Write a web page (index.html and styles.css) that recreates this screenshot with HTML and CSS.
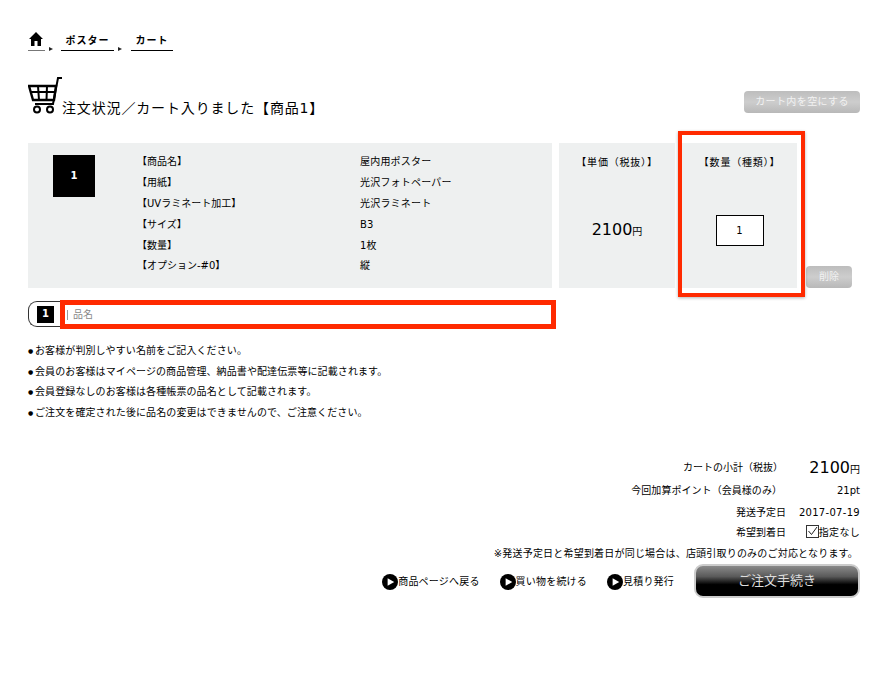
FILE: index.html
```html
<!DOCTYPE html>
<html lang="ja">
<head>
<meta charset="utf-8">
<title>カート</title>
<link rel="stylesheet" href="styles.css">
</head>
<body>
<div class="page">
  <nav class="crumbs">
    <a class="crumb crumb-home">
      <svg width="14" height="14" viewBox="0 0 14 14"><path d="M7 0 L14 7 H12 V14 H8.500 V9 H5.500 V14 H2 V7 H0 Z" fill="#000"/></svg>
    </a>
    <span class="sep"></span>
    <a class="crumb crumb-poster">ポスター</a>
    <span class="sep"></span>
    <a class="crumb crumb-cart">カート</a>
  </nav>

  <header class="head">
    <div class="title">
      <svg class="cart" width="35" height="37" viewBox="0 0 35 37">
        <path d="M34 1 H30 L25 27 H7" fill="none" stroke="#000" stroke-width="2"/>
        <path d="M1 9 H28 L26 23 H5 Z" fill="none" stroke="#000" stroke-width="2.400"/>
        <path d="M2 15 H27 M10 9 L11 23 M19 9 L18.500 23" fill="none" stroke="#000" stroke-width="2"/>
        <circle cx="9" cy="32.500" r="3" fill="none" stroke="#000" stroke-width="2"/>
        <circle cx="22" cy="32.500" r="3" fill="none" stroke="#000" stroke-width="2"/>
      </svg>
      <h1>注文状況／カート入りました【商品1】</h1>
    </div>
    <button class="btn-grey btn-empty">カート内を空にする</button>
  </header>

  <section class="item">
    <div class="panel panel-main">
      <div class="thumb">1</div>
      <dl class="specs">
        <dt>【商品名】</dt><dd>屋内用ポスター</dd>
        <dt>【用紙】</dt><dd>光沢フォトペーパー</dd>
        <dt>【UVラミネート加工】</dt><dd>光沢ラミネート</dd>
        <dt>【サイズ】</dt><dd>B3</dd>
        <dt>【数量】</dt><dd>1枚</dd>
        <dt>【オプション-#0】</dt><dd>縦</dd>
      </dl>
    </div>
    <div class="panel panel-col">
      <div class="col-head">【単価（税抜）】</div>
      <div class="price"><b>2100</b><small>円</small></div>
    </div>
    <div class="panel panel-col panel-qty">
      <div class="col-head">【数量（種類）】</div>
      <div class="qty">1</div>
      <div class="red-box red-qty"></div>
    </div>
    <button class="btn-grey btn-del">削除</button>
  </section>

  <div class="name-row">
    <span class="name-num">1</span>
    <div class="name-input"><span class="caret"></span>品名</div>
  </div>

  <ul class="notes">
    <li><span class="dot">●</span>お客様が判別しやすい名前をご記入ください。</li>
    <li><span class="dot">●</span>会員のお客様はマイページの商品管理、納品書や配達伝票等に記載されます。</li>
    <li><span class="dot">●</span>会員登録なしのお客様は各種帳票の品名として記載されます。</li>
    <li><span class="dot">●</span>ご注文を確定された後に品名の変更はできませんので、ご注意ください。</li>
  </ul>

  <section class="summary">
    <div class="row row-total"><span>カートの小計（税抜）</span><span class="val"><b>2100</b><small>円</small></span></div>
    <div class="row row-pt"><span>今回加算ポイント（会員様のみ）</span><span class="val">21pt</span></div>
    <div class="row row-date"><span>発送予定日</span><span class="val">2017-07-19</span></div>
    <div class="row row-wish"><span>希望到着日</span><span class="val wish"><span class="check"><svg width="13" height="13" viewBox="0 0 13 13"><rect x="0.500" y="0.500" width="12" height="12" fill="#fff" stroke="#333"/><path d="M2.500 6 L5.500 9.500 L11 2" fill="none" stroke="#222" stroke-width="1"/></svg></span>指定なし</span></div>
    <p class="warn">※発送予定日と希望到着日が同じ場合は、店頭引取りのみのご対応となります。</p>
  </section>

  <footer class="actions">
    <a class="link"><svg width="16" height="16" viewBox="0 0 17 17"><circle cx="8.500" cy="8.500" r="8.500" fill="#000"/><path d="M6 4.500 L13 8.500 L6 12.500 Z" fill="#fff"/></svg>商品ページへ戻る</a>
    <a class="link"><svg width="16" height="16" viewBox="0 0 17 17"><circle cx="8.500" cy="8.500" r="8.500" fill="#000"/><path d="M6 4.500 L13 8.500 L6 12.500 Z" fill="#fff"/></svg>買い物を続ける</a>
    <a class="link"><svg width="16" height="16" viewBox="0 0 17 17"><circle cx="8.500" cy="8.500" r="8.500" fill="#000"/><path d="M6 4.500 L13 8.500 L6 12.500 Z" fill="#fff"/></svg>見積り発行</a>
    <button class="btn-order">ご注文手続き</button>
  </footer>
</div>
</body>
</html>
```

FILE: styles.css
```css
* { box-sizing: border-box; }
html, body { margin: 0; padding: 0; background: #fff; }
body {
  width: 880px;
  height: 680px;
  overflow: hidden;
  font-family: "DejaVu Sans", "Noto Sans CJK JP", sans-serif;
  font-size: 10px;
  line-height: 1;
  color: #000;
}
.page { padding: 30px 20px 0 28px; }

.crumbs { display: flex; align-items: flex-end; height: 21px; }
.crumb { display: flex; justify-content: center; align-items: flex-start; height: 20px; border-bottom: 1px solid #000; font-weight: 700; font-size: 10px; padding-top: 5px; letter-spacing: 1px; }
.crumb-home { width: 17px; padding: 1px 2px 0 0; border-bottom-color: #777; }
.crumb-poster { width: 53px; }
.crumb-cart { width: 42px; }
.sep { width: 0; height: 0; margin: 0 9px 0 4px; border-left: 4px solid #222; border-top: 2px solid transparent; border-bottom: 2px solid transparent; }
.crumb-home + .sep { margin-right: 8px; }

.head { display: flex; justify-content: space-between; align-items: flex-end; margin-top: 25px; height: 42px; }
.title { display: flex; align-items: flex-end; }
.cart { display: block; margin-bottom: 4px; margin-right: -1px; }
h1 { margin: 0 0 2px; font-size: 14px; font-weight: 400; line-height: 16px; letter-spacing: 0.850px; }
.btn-grey {
  border: 0;
  border-radius: 4px;
  padding: 0;
  font: inherit;
  color: #f2f2f2;
  background: linear-gradient(#bdbdbd, #cdcdcd 50%, #b8b8b8);
}
.btn-empty { width: 116px; height: 22px; margin-bottom: 5px; letter-spacing: 0.400px; }

.item { display: flex; align-items: stretch; margin-top: 25px; height: 145px; position: relative; }
.panel { background: #eef0f0; }
.panel-main { width: 524px; display: flex; }
.thumb { width: 42px; height: 42px; margin: 12px 0 0 25px; background: #000; color: #fff; font-size: 10px; font-weight: 700; display: flex; align-items: center; justify-content: center; }
.specs { margin: 9px 0 0 42px; display: grid; grid-template-columns: 223px 1fr; grid-auto-rows: 20.800px; align-items: center; }
.specs dt, .specs dd { margin: 0; }
.specs dd { letter-spacing: 0.200px; }
.panel-col { width: 116px; margin-left: 7px; display: flex; flex-direction: column; align-items: center; position: relative; }
.col-head { margin-top: 15px; height: 12px; letter-spacing: 0.800px; }
.price { margin-top: 52px; display: flex; align-items: baseline; }
.price b, .row-total b { font-weight: 400; font-size: 16px; }
.price small, .row-total small { font-size: 10px; }
.qty { margin-top: 45px; width: 48px; height: 31px; background: #fff; border: 1px solid #000; display: flex; align-items: center; justify-content: center; font-size: 10px; }
.panel-qty { width: 115px; }
.red-box { position: absolute; border: 4px solid #ff2a00; pointer-events: none; }
.red-qty { left: -4px; right: -8px; top: -12px; bottom: -9px; box-shadow: 0 1px 3px rgba(0,0,0,.3); }
.btn-del { align-self: flex-end; width: 46px; height: 22px; margin: 0 0 0 9px; }

.name-row { display: flex; position: relative; margin-top: 13px; height: 26px; width: 527px; border: 1px solid #333; border-right: 0; border-radius: 9px 0 0 9px; align-items: center; padding-left: 8px; }
.name-num { width: 17px; height: 17px; background: #000; color: #fff; display: flex; align-items: center; justify-content: center; font-size: 10px; font-weight: 700; }
.name-input { position: absolute; left: 31px; top: -2px; width: 496px; height: 29px; border: 5px solid #ff2a00; background: #fff; display: flex; align-items: center; color: #888; padding-left: 2px; }
.caret { width: 1px; height: 10px; background: #999; margin-right: 5px; }

.notes { list-style: none; margin: 17px 0 0; padding: 0; }
.notes li { height: 20.700px; line-height: 14px; letter-spacing: 0.100px; }
.dot { display: inline-block; width: 7px; font-size: 6px; vertical-align: 1px; letter-spacing: 0; }

.summary { margin-top: 31px; display: flex; flex-direction: column; align-items: flex-end; }
.row { display: flex; justify-content: flex-end; align-items: center; }
.row-total { height: 21px; }
.row-total .val { width: 77px; text-align: right; }
.row-pt { height: 21px; margin-top: 2px; letter-spacing: 0.050px; }
.row-pt .val { width: 78px; text-align: right; letter-spacing: 0; }
.row-date { height: 21px; margin-top: 1px; }
.row-date .val { width: 74px; text-align: right; letter-spacing: 0.300px; }
.row-wish { height: 21px; margin-top: -1px; }
.wish { width: 74px; display: flex; justify-content: flex-end; align-items: center; letter-spacing: .3px; }
.check { display: flex; margin-top: -4px; }
.warn { margin: 4px 0 0; line-height: 12px; letter-spacing: 0.200px; padding-right: 2px; }

.actions { display: flex; justify-content: flex-end; align-items: center; margin-top: 4px; }
.link { display: flex; align-items: center; margin: 2px 20px 0 0; letter-spacing: 0.200px; }
.btn-order {
  width: 166px;
  height: 34px;
  border: 2px solid #ccc;
  border-radius: 9px;
  background: linear-gradient(#8a8a8a, #5a5a5a 35%, #000 62%, #000);
  color: #ddd;
  font: inherit;
  font-size: 13px;
  padding: 0;
}
```
